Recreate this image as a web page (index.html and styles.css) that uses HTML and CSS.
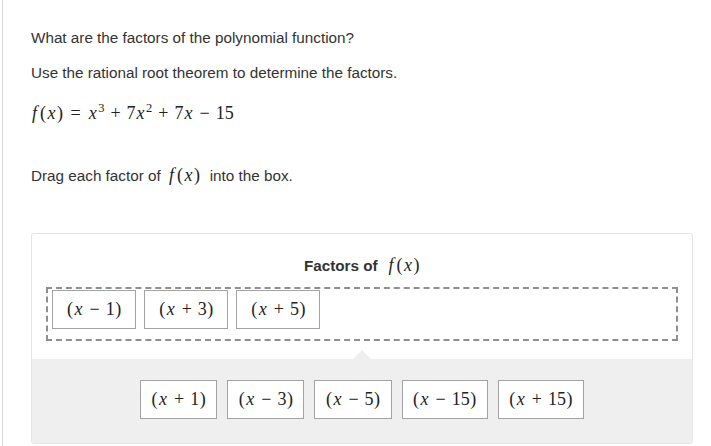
FILE: index.html
```html
<!DOCTYPE html>
<html>
<head>
<meta charset="utf-8">
<link rel="stylesheet" href="styles.css">
</head>
<body>
<div class="page">
  <p class="q first">What are the factors of the polynomial function?</p>
  <p class="q">Use the rational root theorem to determine the factors.</p>
  <p class="formula"><span class="m"><i class="f">f</i><span class="p">(</span><i>x</i><span class="p">)</span><span class="rel">=</span><i>x</i><sup>3</sup><span class="bin">+</span>7<i>x</i><sup>2</sup><span class="bin">+</span>7<i>x</i><span class="bin">−</span>15</span></p>
  <p class="q drag">Drag each factor of <span class="m inl"><i class="f">f</i><span class="p">(</span><i>x</i><span class="p">)</span></span> into the box.</p>
  <div class="panel">
    <div class="panel-head"><span class="head-label">Factors of</span><span class="m inl head-m"><i class="f">f</i><span class="p">(</span><i>x</i><span class="p">)</span></span></div>
    <div class="drop">
      <div class="tile big"><span class="m"><span class="p">(</span><i>x</i><span class="bin">−</span>1<span class="p">)</span></span></div>
      <div class="tile big"><span class="m"><span class="p">(</span><i>x</i><span class="bin">+</span>3<span class="p">)</span></span></div>
      <div class="tile big"><span class="m"><span class="p">(</span><i>x</i><span class="bin">+</span>5<span class="p">)</span></span></div>
    </div>
    <div class="tray">
      <div class="tile"><span class="m"><span class="p">(</span><i>x</i><span class="bin">+</span>1<span class="p">)</span></span></div>
      <div class="tile"><span class="m"><span class="p">(</span><i>x</i><span class="bin">−</span>3<span class="p">)</span></span></div>
      <div class="tile"><span class="m"><span class="p">(</span><i>x</i><span class="bin">−</span>5<span class="p">)</span></span></div>
      <div class="tile"><span class="m"><span class="p">(</span><i>x</i><span class="bin">−</span>15<span class="p">)</span></span></div>
      <div class="tile"><span class="m"><span class="p">(</span><i>x</i><span class="bin">+</span>15<span class="p">)</span></span></div>
    </div>
  </div>
</div>
</body>
</html>
```

FILE: styles.css
```css
html, body {
  margin: 0;
  padding: 0;
  background: #ffffff;
}

body {
  font-family: "Liberation Sans", Arial, sans-serif;
  font-size: 15.25px;
  color: #333333;
}

.page {
  margin-left: 2px;
  border-left: 1px solid #d4d4d4;
  padding: 28px 0 0 28px;
  min-height: 446px;
  box-sizing: border-box;
}

.q {
  margin: 0;
  line-height: 20px;
}

.q + .q {
  margin-top: 15px;
}

.m {
  font-family: "Liberation Serif", "Times New Roman", serif;
  font-size: 18px;
  color: #222222;
  white-space: nowrap;
}

.m i {
  font-style: italic;
  margin: 0 1px;
}

.m i.f {
  margin: 0 2.5px 0 1px;
}

.m .p {
  margin: 0 0.5px;
}

.m sup {
  font-size: 12.5px;
  vertical-align: 0;
  position: relative;
  top: -7px;
  line-height: 0;
  margin-left: 0.5px;
}

.inl {
  line-height: 1;
}

.rel {
  margin: 0 7px;
}

.bin {
  margin: 0 6px;
}

.formula {
  margin: 18px 0 0 0;
  line-height: 24px;
}

.q.drag {
  margin-top: 38px;
  line-height: 24px;
}

.drag .m {
  margin: 0 5px 0 3px;
}

.panel {
  margin-top: 45px;
  width: 662px;
  box-sizing: border-box;
  border: 1px solid #e4e4e4;
  border-radius: 3px;
  overflow: hidden;
  background: #ffffff;
}

.panel-head {
  display: flex;
  justify-content: center;
  align-items: baseline;
  gap: 10px;
  padding-top: 22px;
  height: 18px;
  line-height: 18px;
}

.head-label {
  font-weight: bold;
  color: #333333;
}

.drop {
  margin: 13px 14px 0 14px;
  height: 54px;
  box-sizing: border-box;
  border: 2px dashed #8f8f8f;
  padding: 1px 4px 0 4px;
  display: flex;
  gap: 8px;
  align-items: flex-start;
}

.tray {
  position: relative;
  margin-top: 18px;
  background: #efefef;
  padding: 21px 0 24px 0;
  display: flex;
  justify-content: center;
  gap: 10px;
}

.tray::before {
  content: "";
  position: absolute;
  top: -9px;
  left: 50%;
  margin-left: -9px;
  border-left: 9px solid transparent;
  border-right: 9px solid transparent;
  border-bottom: 9px solid #efefef;
}

.tile {
  height: 39px;
  box-sizing: border-box;
  border: 1px solid #a3a3a3;
  background: #ffffff;
  padding: 0 10px;
  display: flex;
  align-items: center;
  justify-content: center;
}

.tile.big {
  padding: 0 13.5px;
}
```
